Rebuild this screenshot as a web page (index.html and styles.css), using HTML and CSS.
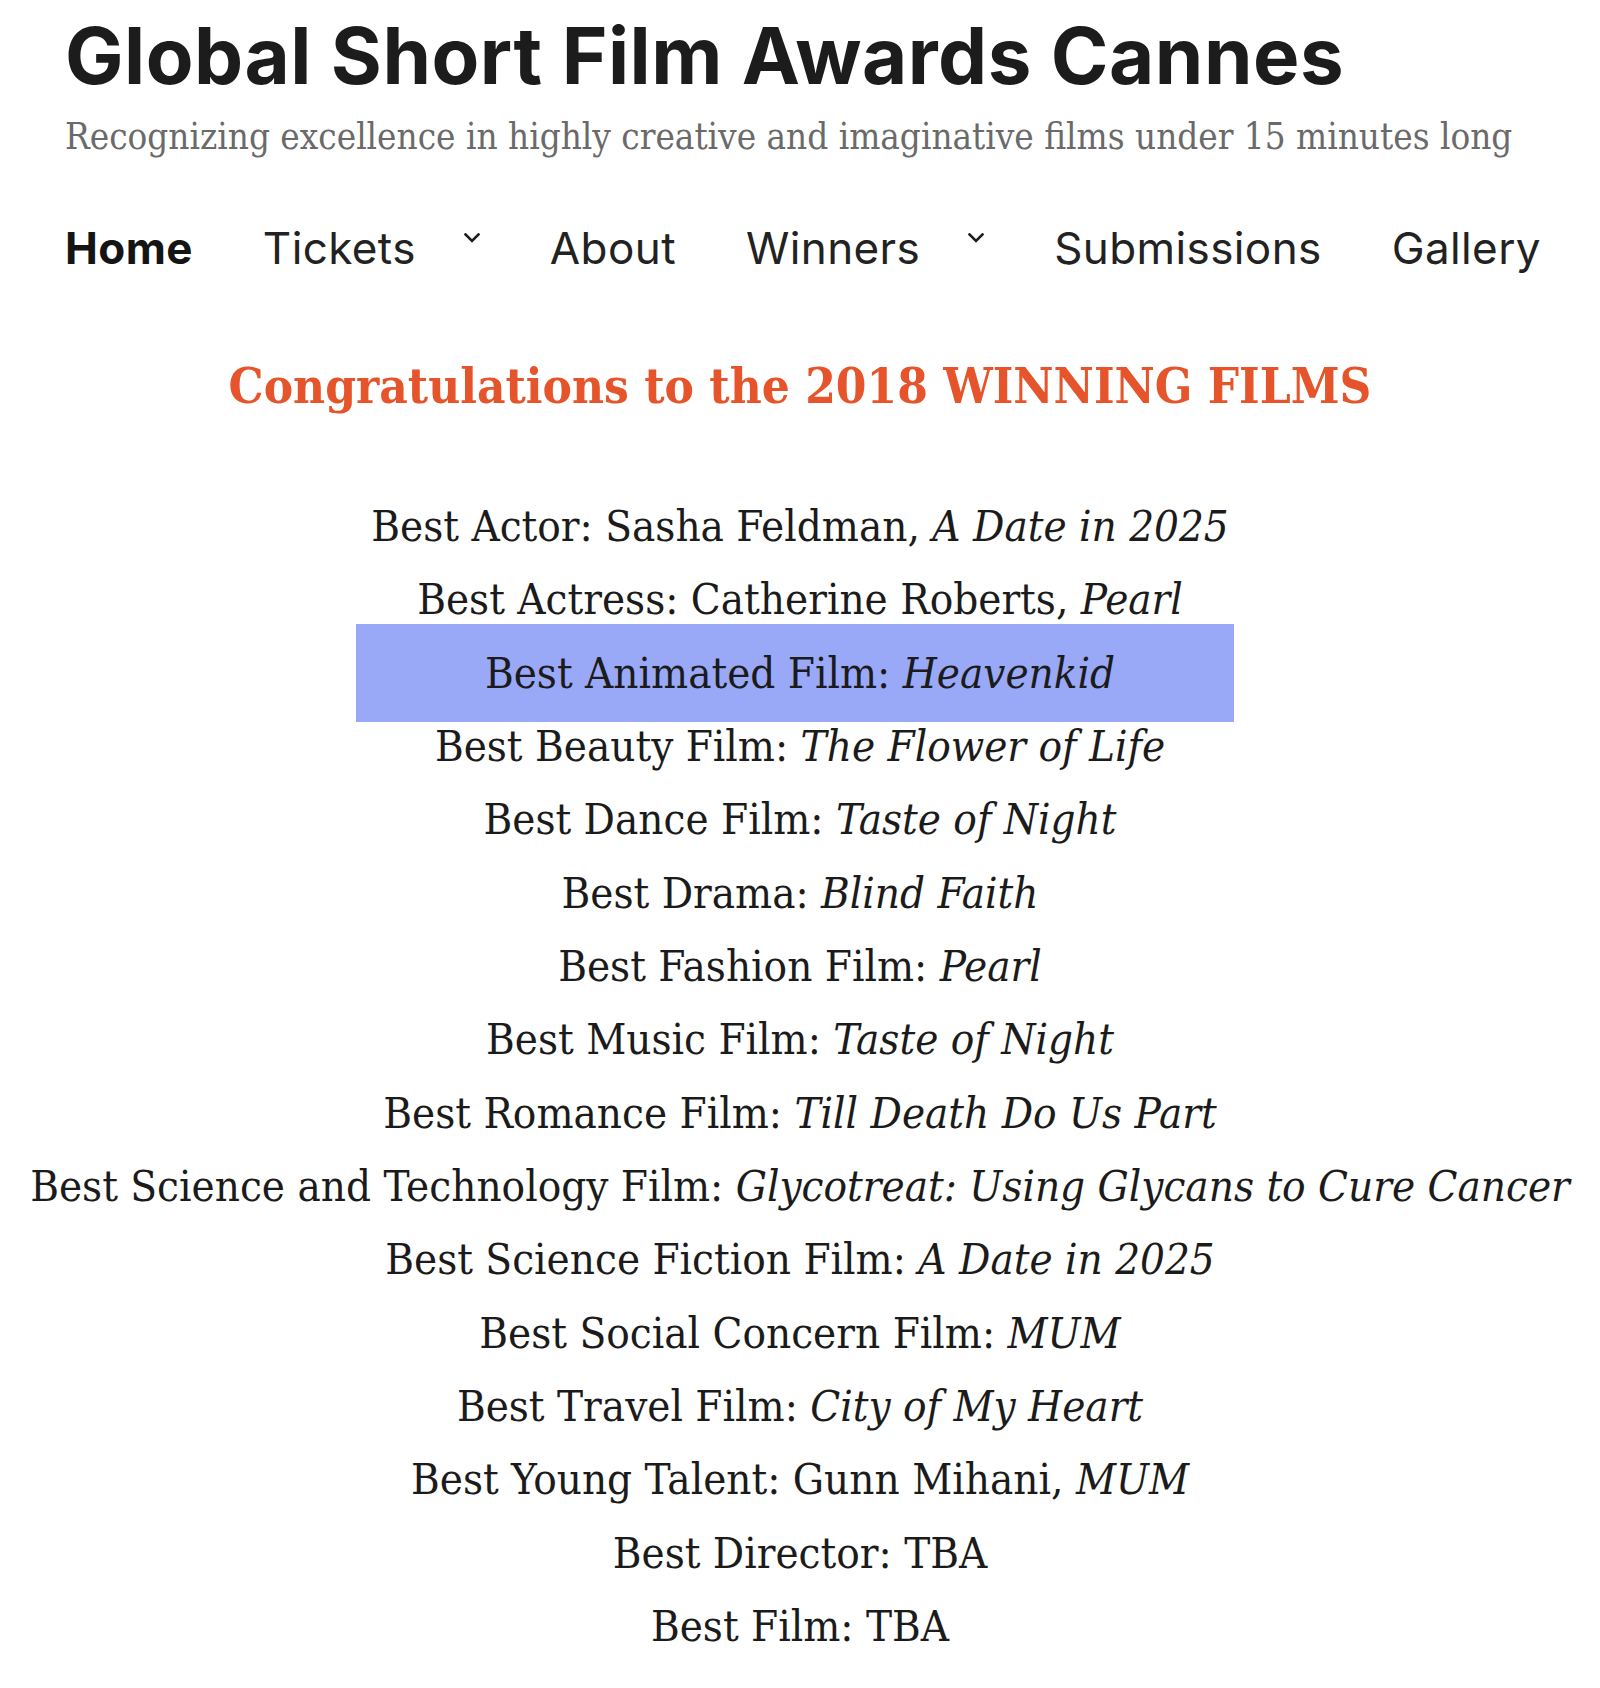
FILE: index.html
```html
<!DOCTYPE html>
<html lang="en">
<head>
<meta charset="utf-8">
<title>Global Short Film Awards Cannes</title>
<link rel="stylesheet" href="styles.css">
</head>
<body>
<header class="site-header">
  <h1 class="site-title">Global Short Film Awards Cannes</h1>
  <p class="site-tagline">Recognizing excellence in highly creative and imaginative films under 15 minutes long</p>
  <nav class="main-nav">
    <a class="nav-item is-active" href="#">Home</a>
    <a class="nav-item" href="#">Tickets<svg class="chev" viewBox="0 0 16 10" width="16" height="10"><polyline points="1.5,1.5 8,8 14.5,1.5" /></svg></a>
    <a class="nav-item" href="#">About</a>
    <a class="nav-item" href="#">Winners<svg class="chev" viewBox="0 0 16 10" width="16" height="10"><polyline points="1.5,1.5 8,8 14.5,1.5" /></svg></a>
    <a class="nav-item" href="#">Submissions</a>
    <a class="nav-item" href="#">Gallery</a>
  </nav>
</header>
<main class="content">
  <h2 class="winners-heading">Congratulations to the 2018 WINNING FILMS</h2>
  <ul class="winners">
    <li>Best Actor: Sasha Feldman, <em>A Date in 2025</em></li>
    <li>Best Actress: Catherine Roberts, <em>Pearl</em></li>
    <li class="is-highlighted">Best Animated Film: <em>Heavenkid</em></li>
    <li>Best Beauty Film: <em>The Flower of Life</em></li>
    <li>Best Dance Film: <em>Taste of Night</em></li>
    <li>Best Drama: <em>Blind Faith</em></li>
    <li>Best Fashion Film: <em>Pearl</em></li>
    <li>Best Music Film: <em>Taste of Night</em></li>
    <li>Best Romance Film: <em>Till Death Do Us Part</em></li>
    <li>Best Science and Technology Film: <em>Glycotreat: Using Glycans to Cure Cancer</em></li>
    <li>Best Science Fiction Film: <em>A Date in 2025</em></li>
    <li>Best Social Concern Film: <em>MUM</em></li>
    <li>Best Travel Film: <em>City of My Heart</em></li>
    <li>Best Young Talent: Gunn Mihani, <em>MUM</em></li>
    <li>Best Director: TBA</li>
    <li>Best Film: TBA</li>
  </ul>
</main>
</body>
</html>
```

FILE: styles.css
```css
html, body {
  margin: 0;
  padding: 0;
  background: #ffffff;
}

body {
  width: 1600px;
  color: #1b1b1b;
  font-family: "DejaVu Serif", "Liberation Serif", serif;
}

.site-header {
  padding: 11px 0 0 65px;
}

.site-title {
  margin: 0;
  font-family: Inter, "Noto Sans", sans-serif;
  font-weight: 700;
  font-size: 78px;
  line-height: 90px;
  color: #1c1c1c;
  letter-spacing: 0.5px;
}

.site-tagline {
  margin: 16px 0 0;
  font-family: "DejaVu Serif Condensed", "DejaVu Serif", serif;
  font-stretch: condensed;
  font-size: 36.5px;
  line-height: 40px;
  color: #6a6a6a;
}

.main-nav {
  margin-top: 66px;
  display: flex;
  align-items: flex-start;
  gap: 70px;
  font-family: Inter, "Noto Sans", sans-serif;
  font-size: 44px;
  line-height: 50px;
  letter-spacing: 0.4px;
}

.nav-item {
  display: flex;
  align-items: flex-start;
  color: #222222;
  text-decoration: none;
  font-weight: 400;
}

.nav-item.is-active {
  font-weight: 700;
  color: #141414;
}

.chev {
  margin-left: 48px;
  margin-top: 10px;
  fill: none;
  stroke: #1d1d1d;
  stroke-width: 2.6;
  stroke-linecap: square;
}

.content {
  text-align: center;
}

.winners-heading {
  margin: 83px 0 0;
  font-family: "DejaVu Serif Condensed", "DejaVu Serif", serif;
  font-stretch: condensed;
  font-weight: 700;
  font-size: 49px;
  line-height: 60px;
  color: #e5542a;
}

.winners {
  list-style: none;
  margin: 74px 0 0;
  padding: 0;
  font-family: "DejaVu Serif Condensed", "DejaVu Serif", serif;
  font-stretch: condensed;
  font-size: 43.5px;
  line-height: 73.33px;
  white-space: nowrap;
}

.winners li {
  position: relative;
  z-index: 0;
}

.winners em {
  font-style: italic;
}

.winners li.is-highlighted::before {
  content: "";
  position: absolute;
  z-index: -1;
  top: -13px;
  left: calc(50% - 444px);
  width: 878px;
  height: 98px;
  background: #9aa8f8;
}
```
